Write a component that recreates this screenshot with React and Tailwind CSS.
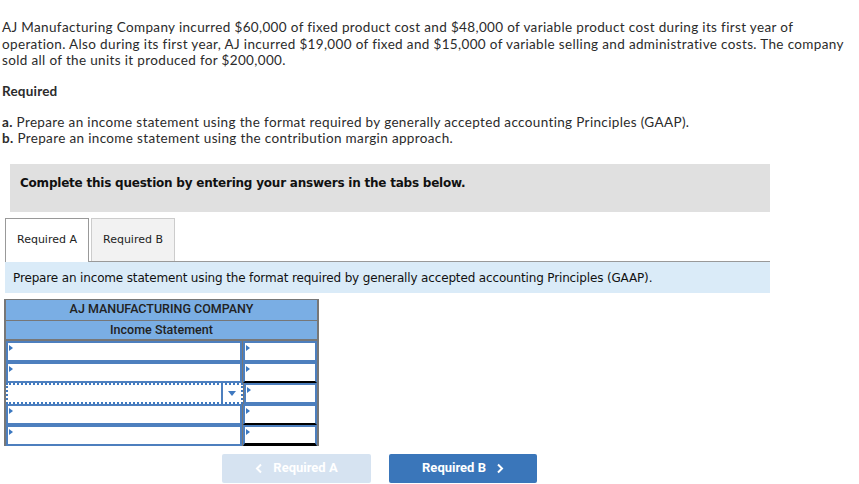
import React from 'react';

const Marker = () => (
  <span className="absolute top-[2px] left-[1px] w-0 h-0 border-y-[3px] border-y-transparent border-l-[4px] border-l-[#3b78c0]" />
);

const Cell = ({ className = '', marker = true, children }) => (
  <div className={`relative bg-white border-2 border-[#4d7fbe] ${className}`}>
    {marker && <Marker />}
    {children}
  </div>
);

export default function App() {
  const rows = [
    { dropdown: false, under: '' },
    { dropdown: false, under: 'border-b-2 border-b-black' },
    { dropdown: true, under: '' },
    { dropdown: false, under: 'border-b-2 border-b-black' },
    { dropdown: false, under: 'border-b-[3px] border-b-black' },
  ];

  return (
    <div className="w-[859px] h-[484px] bg-white overflow-hidden text-[#333]">
      {/* Question */}
      <div className="pl-[2px] pt-[19px] font-['Lato',sans-serif] text-[13.5px] leading-[16.5px] tracking-[0.35px] text-[#2b2b2b]">
        <p className="whitespace-nowrap">
          AJ Manufacturing Company incurred $60,000 of fixed product cost and $48,000 of variable product cost during its first year of
          <br />
          operation. Also during its first year, AJ incurred $19,000 of fixed and $15,000 of variable selling and administrative costs. The company
          <br />
          sold all of the units it produced for $200,000.
        </p>
        <p className="mt-[14px] font-bold leading-[16px] tracking-[0.2px]">Required</p>
        <p className="mt-[15px] leading-[16px]">
          <b>a.</b> Prepare an income statement using the format required by generally accepted accounting Principles (GAAP).
        </p>
        <p className="leading-[16px]">
          <b>b.</b> Prepare an income statement using the contribution margin approach.
        </p>
      </div>

      {/* Instructions bar */}
      <div className="ml-[10px] mt-[18px] w-[760px] h-[48px] bg-[#e0e0e0] pl-[10px] pt-[11px] font-['DejaVu_Sans',sans-serif] text-[12px] leading-[16px] tracking-[-0.22px] font-bold text-[#111]">
        Complete this question by entering your answers in the tabs below.
      </div>

      {/* Tabs */}
      <div className="ml-[5px] mt-[6px] w-[765px] flex items-end border-b border-[#999] font-['DejaVu_Sans',sans-serif] text-[11px] text-[#222]">
        <div className="w-[84px] h-[44px] -mb-px bg-white border border-b-0 border-[#999] flex items-center justify-center">
          Required A
        </div>
        <div className="ml-[2px] w-[84px] h-[43px] bg-[#f2f2f2] border border-b-0 border-[#ccc] flex items-center justify-center pt-[1px]">
          Required B
        </div>
      </div>
      <div className="ml-[5px] w-[765px] h-[31px] bg-[#daebf8] pl-[8px] pt-[2px] flex items-center font-['DejaVu_Sans',sans-serif] text-[12px] tracking-[-0.15px] text-[#111]">
        Prepare an income statement using the format required by generally accepted accounting Principles (GAAP).
      </div>

      {/* Table */}
      <div className="ml-[4px] mt-[6px] w-[315px] border-x-2 border-t border-[#777] bg-[#777] font-['Roboto',sans-serif] text-[12.5px] font-medium text-[#222]">
        <div className="h-[21px] bg-[#7aaee4] flex items-center justify-center border-b border-[#777]">
          AJ MANUFACTURING COMPANY
        </div>
        <div className="h-[20px] bg-[#7aaee4] flex items-center justify-center border-b-2 border-[#777] pt-[1px]">
          Income Statement
        </div>
        {rows.map((r, i) => (
          <div key={i} className="flex h-[21px] gap-[1px]">
            {r.dropdown ? (
              <div className="relative w-[237px] bg-white border-2 border-dotted border-[#3f79c0] flex justify-end items-center">
                <span className="h-[17px] border-l-2 border-[#4d7fbe]" />
                <span className="mx-[5px] w-0 h-0 border-x-[4px] border-x-transparent border-t-[5px] border-t-[#3f79c0]" />
              </div>
            ) : (
              <Cell className="w-[236px]" />
            )}
            <Cell className={`flex-1 ${r.under}`} />
          </div>
        ))}
      </div>

      {/* Navigation */}
      <div className="ml-[222px] mt-[8px] flex gap-[18px] font-['Roboto',sans-serif] text-[13px] font-bold text-white">
        <button className="w-[149px] h-[29px] rounded-[2px] bg-[#d6e3f1] flex items-center justify-center gap-[10px]">
          <svg width="8" height="11" viewBox="0 0 8 11" fill="none" stroke="white" strokeWidth="2">
            <path d="M6 1.5 2 5.5l4 4" />
          </svg>
          Required A
        </button>
        <button className="w-[148px] h-[29px] rounded-[2px] bg-[#3a76ba] flex items-center justify-center gap-[10px]">
          Required B
          <svg width="8" height="11" viewBox="0 0 8 11" fill="none" stroke="white" strokeWidth="2">
            <path d="M2 1.5l4 4-4 4" />
          </svg>
        </button>
      </div>
    </div>
  );
}
